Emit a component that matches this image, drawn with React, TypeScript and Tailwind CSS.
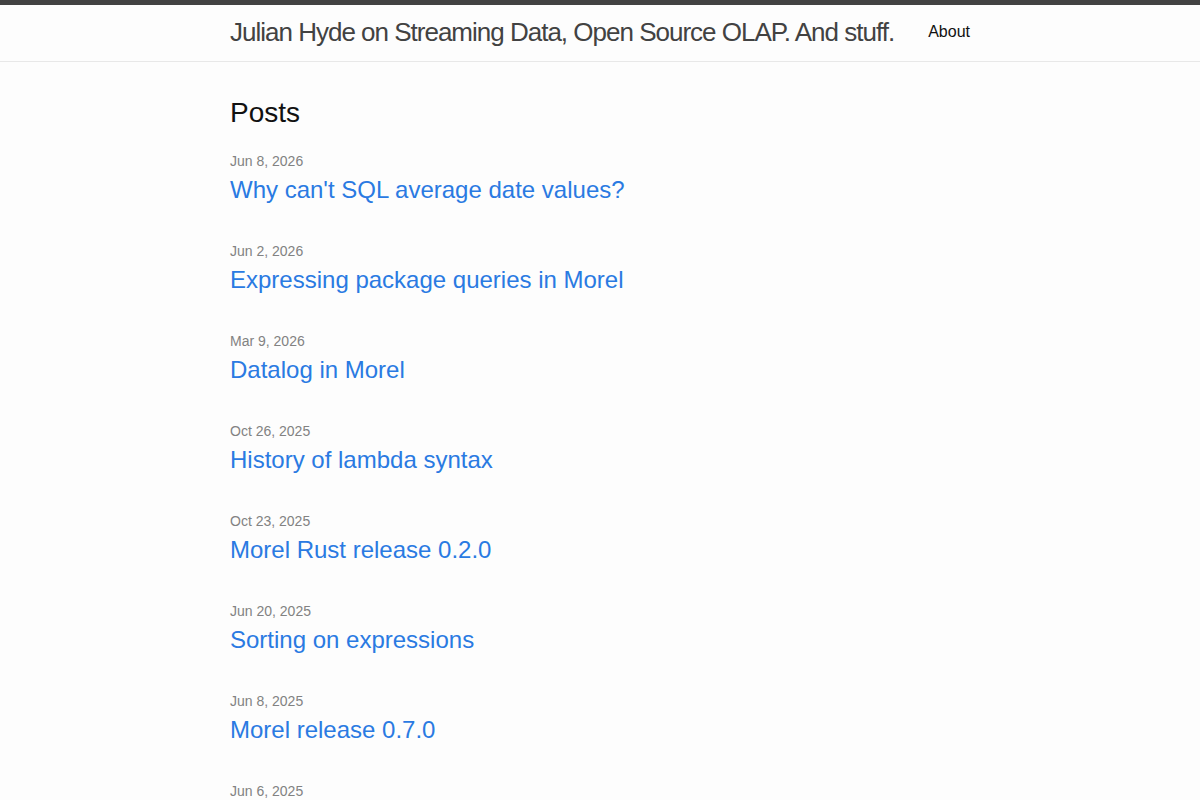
import React from "react";

interface Post {
  date: string;
  title: string;
}

const posts: Post[] = [
  { date: "Jun 8, 2026", title: "Why can't SQL average date values?" },
  { date: "Jun 2, 2026", title: "Expressing package queries in Morel" },
  { date: "Mar 9, 2026", title: "Datalog in Morel" },
  { date: "Oct 26, 2025", title: "History of lambda syntax" },
  { date: "Oct 23, 2025", title: "Morel Rust release 0.2.0" },
  { date: "Jun 20, 2025", title: "Sorting on expressions" },
  { date: "Jun 8, 2025", title: "Morel release 0.7.0" },
  { date: "Jun 6, 2025", title: "Morel release 0.6.0" },
];

export default function App() {
  return (
    <div
      className="min-h-screen bg-[#fdfdfd] text-[#111111] text-base leading-normal"
      style={{ fontFamily: '"Liberation Sans", Helvetica, Arial, sans-serif' }}
    >
      {/* Site header */}
      <header className="border-t-[5px] border-t-[#424242] border-b border-b-[#e8e8e8] min-h-[62px]">
        <div className="max-w-[800px] mx-auto px-[30px] flex justify-between">
          <a href="#" className="text-[26px] leading-[54px] tracking-[-1px] font-light text-[#424242]">
            Julian Hyde on Streaming Data, Open Source OLAP. And stuff.
          </a>
          <nav className="leading-[54px]">
            <a href="#" className="text-[#111111]">About</a>
          </nav>
        </div>
      </header>

      {/* Page content */}
      <main className="py-[30px]">
        <div className="max-w-[800px] mx-auto px-[30px]">
          <h1 className="text-[28px] leading-[42px] mb-[17px]">Posts</h1>
          <ul>
            {posts.map((p) => (
              <li key={p.title} className="mb-[33px]">
                <span className="block text-sm leading-[21px] text-[#828282]">{p.date}</span>
                <h3 className="text-2xl leading-9">
                  <a href="#" className="text-[#2a7ae2]">{p.title}</a>
                </h3>
              </li>
            ))}
          </ul>
        </div>
      </main>
    </div>
  );
}
